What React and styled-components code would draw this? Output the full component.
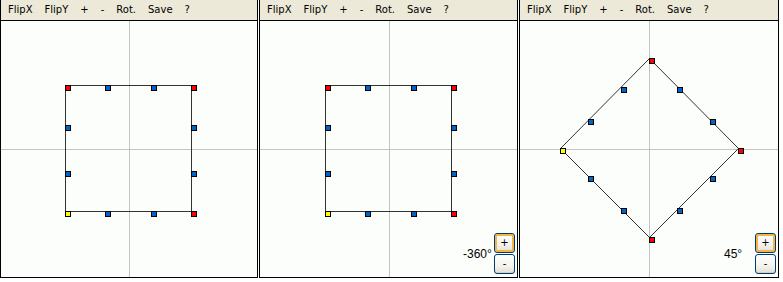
import React from "react";
import styled, { createGlobalStyle } from "styled-components";

const GlobalStyle = createGlobalStyle`
  html, body {
    margin: 0;
    padding: 0;
    background: #ffffff;
  }
`;

const Row = styled.div`
  display: grid;
  grid-template-columns: 258px 259px 260px;
  column-gap: 1px;
  width: 779px;
`;

const Panel = styled.div`
  display: flex;
  flex-direction: column;
  height: 278px;
  box-sizing: border-box;
  border: 1px solid #000;
  border-top: none;
`;

const Toolbar = styled.div`
  display: flex;
  align-items: center;
  height: 20px;
  padding-left: 1px;
  background: #ece9d8;
  border-bottom: 1px solid #000;
  font-family: "DejaVu Sans", "Liberation Sans", sans-serif;
  font-size: 10px;
  color: #000;
`;

const ToolItem = styled.span`
  padding: 0 6px;
  line-height: 20px;
  cursor: default;
  white-space: nowrap;
`;

const Canvas = styled.div`
  position: relative;
  flex: 1;
  background: #fcfefc;
  overflow: hidden;

  svg {
    display: block;
  }
`;

const Controls = styled.div`
  position: absolute;
  right: 2px;
  bottom: 3px;
  display: flex;
  align-items: center;
  gap: 4px;
`;

const Angle = styled.span`
  width: 27px;
  font-family: "Liberation Sans", Arial, sans-serif;
  font-size: 12px;
  color: #000;
  white-space: nowrap;
`;

const StepColumn = styled.div`
  display: flex;
  flex-direction: column;
  gap: 1px;
`;

const StepButton = styled.button`
  width: 21px;
  height: 20px;
  padding: 0;
  border: 1px solid #003c74;
  border-radius: 3px;
  background: linear-gradient(#ffffff, #f4f3ee 60%, #e2ded3);
  box-shadow: ${(p) =>
    p.$focused ? "inset 0 0 0 2px #f6b445" : "inset 0 -1px 0 #d6d0c5"};
  font-family: "DejaVu Sans", "Liberation Sans", sans-serif;
  font-size: 10px;
  line-height: 16px;
  color: #000;
`;

const MENU = ["FlipX", "FlipY", "+", "-", "Rot.", "Save", "?"];

const SQUARE = [
  [-64, -64, "red"],
  [-24, -64, "blue"],
  [22, -64, "blue"],
  [62, -64, "red"],
  [62, -24, "blue"],
  [62, 22, "blue"],
  [62, 62, "red"],
  [22, 62, "blue"],
  [-24, 62, "blue"],
  [-64, 62, "yellow"],
  [-64, 22, "blue"],
  [-64, -24, "blue"],
];

const FILL = { red: "#ff0000", blue: "#0064c8", yellow: "#ffff00" };

const Drawing = ({ width, height, angle }) => {
  const cx = Math.ceil(width / 2);
  const cy = 128;
  const r = (angle * Math.PI) / 180;
  const pts = SQUARE.map(([dx, dy, c]) => [
    Math.round(cx + dx * Math.cos(r) - dy * Math.sin(r)),
    Math.round(cy + dx * Math.sin(r) + dy * Math.cos(r)),
    c,
  ]);
  const corners = pts.filter((p) => p[2] !== "blue");
  const outline = corners.map(([x, y]) => `${x + 0.5},${y + 0.5}`).join(" ");

  return (
    <svg width={width} height={height}>
      <line x1={cx + 0.5} y1={0} x2={cx + 0.5} y2={height} stroke="#c4c4c4" />
      <line x1={0} y1={cy + 0.5} x2={width} y2={cy + 0.5} stroke="#c4c4c4" />
      <polygon
        points={outline}
        fill="none"
        stroke="#333"
        strokeWidth="1"
        shapeRendering={angle % 90 === 0 ? "crispEdges" : "auto"}
      />
      {pts.map(([x, y, c], i) => (
        <rect
          key={i}
          x={x + 0.5}
          y={y + 0.5}
          width={5}
          height={5}
          fill={FILL[c]}
          stroke="#000"
          shapeRendering="crispEdges"
        />
      ))}
    </svg>
  );
};

const View = ({ width, angle, label }) => (
  <Panel>
    <Toolbar>
      {MENU.map((m) => (
        <ToolItem key={m}>{m}</ToolItem>
      ))}
    </Toolbar>
    <Canvas>
      <Drawing width={width - 2} height={256} angle={angle} />
      {label && (
        <Controls>
          <Angle>{label}</Angle>
          <StepColumn>
            <StepButton $focused>+</StepButton>
            <StepButton>-</StepButton>
          </StepColumn>
        </Controls>
      )}
    </Canvas>
  </Panel>
);

export default function App() {
  return (
    <>
      <GlobalStyle />
      <Row>
        <View width={258} angle={0} />
        <View width={259} angle={-360} label="-360°" />
        <View width={260} angle={45} label="45°" />
      </Row>
    </>
  );
}
